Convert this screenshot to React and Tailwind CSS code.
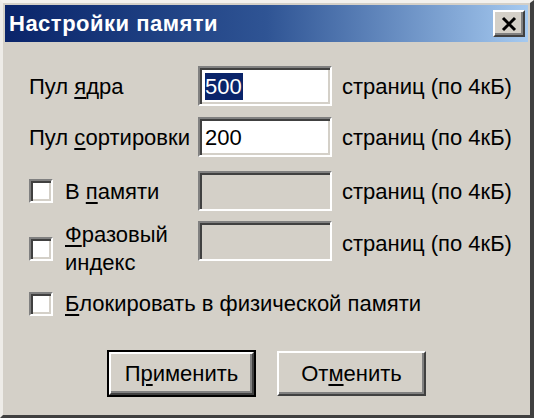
import React from 'react';

/**
 * Classic Win2000-style dialog: "Настройки памяти"
 */

const sunken =
  'border-2 border-t-[#808080] border-l-[#808080] border-b-white border-r-white shadow-[inset_2px_2px_0_#404040,inset_-2px_-2px_0_#d4d0c8]';

function Mn({ children }) {
  // mnemonic letter, underlined like a Windows accelerator
  return <span className="underline decoration-2 underline-offset-[3px]">{children}</span>;
}

function TextBox({ value, selected, disabled }) {
  return (
    <div
      className={`w-[134px] h-[40px] flex items-center pl-[5px] ${sunken} ${
        disabled ? 'bg-[#d4d0c8]' : 'bg-white'
      }`}
    >
      {selected ? (
        <span className="bg-[#0a246a] text-white leading-[27px] pr-[1px]">{value}</span>
      ) : (
        <span>{value}</span>
      )}
    </div>
  );
}

function CheckBox() {
  return <div className={`w-[24px] h-[24px] shrink-0 bg-white ${sunken}`} />;
}

function Suffix() {
  return <span className="ml-[10px]">страниц (по 4кБ)</span>;
}

export default function App() {
  return (
    <div className="w-[534px] h-[418px] bg-[#d4d0c8] border-l-[3px] border-t-[3px] border-r-[4px] border-b-[3px] border-l-[#eeece8] border-t-[#f3f1ed] border-r-[#404040] border-b-[#404040] p-[2px] flex flex-col text-black text-[22px] font-['Liberation_Sans',Arial,sans-serif]">
      {/* Title bar */}
      <div className="h-[37px] shrink-0 flex items-center justify-between pl-[4px] pr-[3px] bg-linear-to-r from-[#0a246a] via-[#2f5494] to-[#a6caf0]">
        <span className="text-white font-bold text-[22px] tracking-[0.5px]">Настройки памяти</span>
        <button className="w-[32px] h-[27px] flex items-center justify-center bg-[#d4d0c8] border-2 border-t-white border-l-white border-b-[#404040] border-r-[#404040] shadow-[inset_-2px_-2px_0_#808080]">
          <svg width="18" height="16" viewBox="0 0 18 16">
            <path d="M3 2 L15 14 M15 2 L3 14" stroke="#000" strokeWidth="3" />
          </svg>
        </button>
      </div>

      {/* Body */}
      <div className="flex flex-col pl-[24px] pt-[24px]">
        <div className="flex items-center">
          <span className="w-[169px]">
            Пул <Mn>я</Mn>дра
          </span>
          <TextBox value="500" selected />
          <Suffix />
        </div>

        <div className="flex items-center mt-[11px]">
          <span className="w-[169px]">
            Пул <Mn>с</Mn>ортировки
          </span>
          <TextBox value="200" />
          <Suffix />
        </div>

        <div className="flex items-center mt-[14px]">
          <div className="w-[169px] flex items-center">
            <CheckBox />
            <span className="ml-[12px]">
              В <Mn>п</Mn>амяти
            </span>
          </div>
          <TextBox disabled />
          <Suffix />
        </div>

        <div className="flex items-start mt-[10px]">
          <div className="w-[169px] flex items-center">
            <CheckBox />
            <span className="ml-[12px] leading-[28px]">
              <Mn>Ф</Mn>разовый
              <br />
              индекс
            </span>
          </div>
          <TextBox disabled />
          <span className="ml-[10px] self-start mt-[6px]">страниц (по 4кБ)</span>
        </div>

        <div className="flex items-center mt-[10px]">
          <CheckBox />
          <span className="ml-[12px]">
            <Mn>Б</Mn>локировать в физической памяти
          </span>
        </div>

        {/* Buttons */}
        <div className="flex items-center justify-center gap-[21px] mt-[30px] pr-[24px]">
          <button className="w-[149px] h-[47px] border-2 border-black">
            <div className="w-full h-full flex items-center justify-center border-2 border-t-white border-l-white border-b-[#404040] border-r-[#404040] shadow-[inset_-2px_-2px_0_#808080]">
              П<Mn>р</Mn>именить
            </div>
          </button>
          <button className="w-[149px] h-[45px] flex items-center justify-center border-2 border-t-white border-l-white border-b-[#404040] border-r-[#404040] shadow-[inset_-2px_-2px_0_#808080]">
            От<Mn>м</Mn>енить
          </button>
        </div>
      </div>
    </div>
  );
}
